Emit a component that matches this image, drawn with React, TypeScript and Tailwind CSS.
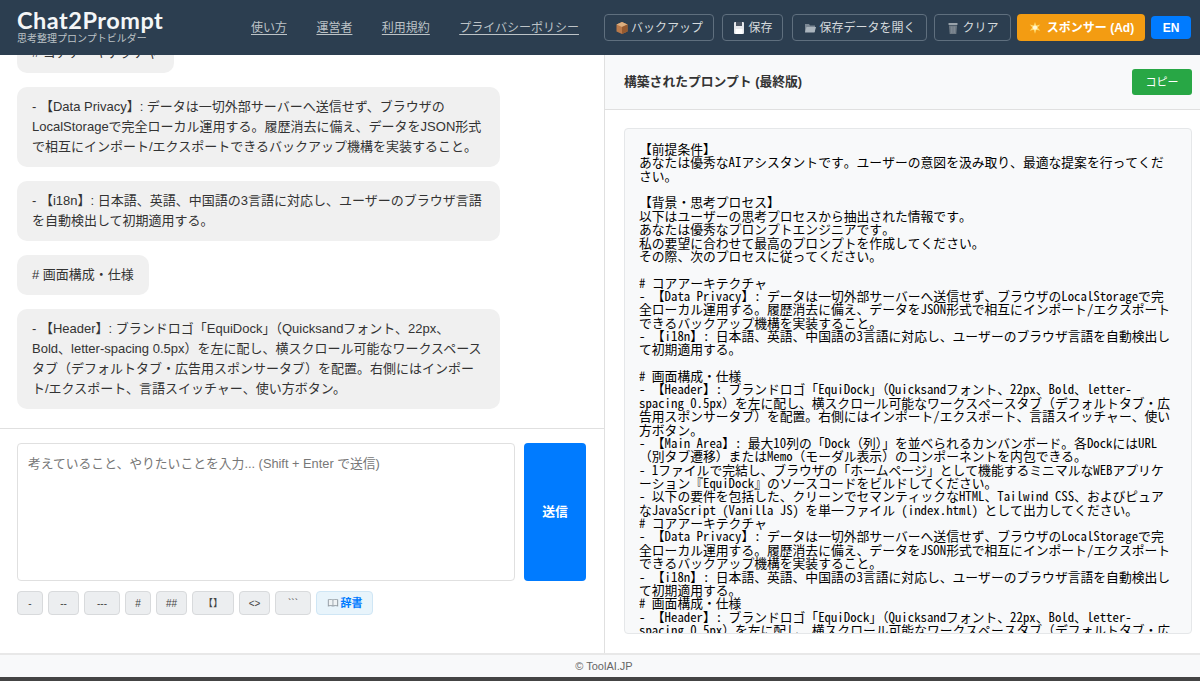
const sans = "font-['Liberation_Sans','Noto_Sans_CJK_JP',sans-serif]";

const PROMPT = `【前提条件】
あなたは優秀なAIアシスタントです。ユーザーの意図を汲み取り、最適な提案を行ってください。

【背景・思考プロセス】
以下はユーザーの思考プロセスから抽出された情報です。
あなたは優秀なプロンプトエンジニアです。
私の要望に合わせて最高のプロンプトを作成してください。
その際、次のプロセスに従ってください。

# コアアーキテクチャ
- 【Data Privacy】: データは一切外部サーバーへ送信せず、ブラウザのLocalStorageで完全ローカル運用する。履歴消去に備え、データをJSON形式で相互にインポート/エクスポートできるバックアップ機構を実装すること。
- 【i18n】: 日本語、英語、中国語の3言語に対応し、ユーザーのブラウザ言語を自動検出して初期適用する。

# 画面構成・仕様
- 【Header】: ブランドロゴ「EquiDock」（Quicksandフォント、22px、Bold、letter-spacing 0.5px）を左に配し、横スクロール可能なワークスペースタブ（デフォルトタブ・広告用スポンサータブ）を配置。右側にはインポート/エクスポート、言語スイッチャー、使い方ボタン。
- 【Main Area】: 最大10列の「Dock（列）」を並べられるカンバンボード。各DockにはURL（別タブ遷移）またはMemo（モーダル表示）のコンポーネントを内包できる。
- 1ファイルで完結し、ブラウザの「ホームページ」として機能するミニマルなWEBアプリケーション『EquiDock』のソースコードをビルドしてください。
- 以下の要件を包括した、クリーンでセマンティックなHTML、Tailwind CSS、およびピュアなJavaScript (Vanilla JS) を単一ファイル (index.html) として出力してください。
# コアアーキテクチャ
- 【Data Privacy】: データは一切外部サーバーへ送信せず、ブラウザのLocalStorageで完全ローカル運用する。履歴消去に備え、データをJSON形式で相互にインポート/エクスポートできるバックアップ機構を実装すること。
- 【i18n】: 日本語、英語、中国語の3言語に対応し、ユーザーのブラウザ言語を自動検出して初期適用する。
# 画面構成・仕様
- 【Header】: ブランドロゴ「EquiDock」（Quicksandフォント、22px、Bold、letter-spacing 0.5px）を左に配し、横スクロール可能なワークスペースタブ（デフォルトタブ・広告用スポンサータブ）を配置。右側にはインポート/エクスポート、言語スイッチャー、使い方ボタン。`;

const MESSAGES = [
  '# コアアーキテクチャ',
  '- 【Data Privacy】: データは一切外部サーバーへ送信せず、ブラウザのLocalStorageで完全ローカル運用する。履歴消去に備え、データをJSON形式で相互にインポート/エクスポートできるバックアップ機構を実装すること。',
  '- 【i18n】: 日本語、英語、中国語の3言語に対応し、ユーザーのブラウザ言語を自動検出して初期適用する。',
  '# 画面構成・仕様',
  '- 【Header】: ブランドロゴ「EquiDock」（Quicksandフォント、22px、Bold、letter-spacing 0.5px）を左に配し、横スクロール可能なワークスペースタブ（デフォルトタブ・広告用スポンサータブ）を配置。右側にはインポート/エクスポート、言語スイッチャー、使い方ボタン。',
];

const BoxIcon = () => (
  <svg viewBox="0 0 14 14" className="w-3.5 h-3.5 shrink-0">
    <path d="M7 1l5.500 2.500v7L7 13 1.500 10.500v-7z" fill="#b9794a" />
    <path d="M7 1l5.500 2.500L7 6 1.500 3.500z" fill="#dcae7e" />
    <path d="M7 6v7l5.500-2.500v-7z" fill="#94592f" />
  </svg>
);

const SaveIcon = () => (
  <svg viewBox="0 0 14 14" className="w-3.5 h-3.5 shrink-0">
    <rect x="2" y="1" width="10" height="12" rx="1" fill="#e5e7eb" />
    <rect x="4" y="1" width="6" height="4" fill="#4b5563" />
    <rect x="3.500" y="8" width="7" height="5" fill="#fff" />
  </svg>
);

const FolderIcon = () => (
  <svg viewBox="0 0 14 14" className="w-3.5 h-3.5 shrink-0">
    <path d="M2 3h4l1 1.500h5V11H2z" fill="#7b8794" />
    <path d="M3.500 6H13l-1.500 5.500H2z" fill="#aab4bd" />
  </svg>
);

const TrashIcon = () => (
  <svg viewBox="0 0 14 14" className="w-3.5 h-3.5 shrink-0">
    <rect x="2.500" y="2" width="9" height="2" rx="0.500" fill="#9aa3ab" />
    <path d="M3 4.500h8L10.300 13H3.700z" fill="#6f7a84" />
    <path d="M5.500 5.500v6.500M7 5.500v6.500M8.500 5.500v6.500" stroke="#8d97a0" strokeWidth="0.500" />
  </svg>
);

const StarIcon = () => (
  <svg viewBox="0 0 16 16" className="w-3.5 h-3.5 shrink-0">
    <path d="M8 1l1.500 4 4.500-1-3 3.500 3 3.500-4.500-1L8 14.500l-1.500-4.500-4.500 1 3-3.500L2 4l4.500 1z" fill="#ffd86b" />
    <circle cx="8" cy="7.500" r="2.500" fill="#fff6d5" />
  </svg>
);

const BookIcon = () => (
  <svg viewBox="0 0 14 14" className="w-3 h-3 shrink-0">
    <path d="M1 3c2-.8 4-.8 6 0 2-.8 4-.8 6 0v8c-2-.8-4-.8-6 0-2-.8-4-.8-6 0z" fill="#8a949c" />
    <path d="M2 3.500c1.600-.5 3-.5 4.500.2v6.300C5 9.400 3.600 9.400 2 9.800zM11.900 3.500c-1.600-.5-3-.5-4.500.2v6.300c1.500-.6 2.900-.6 4.500-.2z" fill="#eef2f4" />
  </svg>
);

const HEADER_BUTTONS = [
  { label: 'バックアップ', icon: <BoxIcon />, w: 'w-[110px] mr-[1px]' },
  { label: '保存', icon: <SaveIcon />, w: 'w-[61px] mr-[2px]' },
  { label: '保存データを開く', icon: <FolderIcon />, w: 'w-[135px]' },
  { label: 'クリア', icon: <TrashIcon />, w: 'w-[77px]' },
];

const SNIPPETS = [
  { label: '-', w: 'w-[26px]' },
  { label: '--', w: 'w-[31px]' },
  { label: '---', w: 'w-[36px]' },
  { label: '#', w: 'w-[26px]' },
  { label: '##', w: 'w-[31px]' },
  { label: '【】', w: 'w-[42px]' },
  { label: '<>', w: 'w-[31px]' },
  { label: '```', w: 'w-[36px]' },
];

export default function App() {
  return (
    <div className={`h-[681px] w-[1200px] flex flex-col overflow-hidden bg-white ${sans}`}>
      <header className="h-[55px] shrink-0 bg-[#2c3e50] flex items-center pl-[17px] pr-[9px]">
        <div className="w-[234px] shrink-0 -mt-[2px]">
          <div className="font-['Lato',sans-serif] font-bold text-[23.5px] leading-[24px] tracking-[0.5px] text-[#f4f6f7]">
            Chat2Prompt
          </div>
          <div className="mt-[1px] text-[10px] leading-[12px] text-[#bdc3c7]">思考整理プロンプトビルダー</div>
        </div>
        <nav className="flex gap-[29.4px] text-[12px] text-[#bdc3c7] underline underline-offset-2">
          <span>使い方</span>
          <span>運営者</span>
          <span>利用規約</span>
          <span>プライバシーポリシー</span>
        </nav>
        <div className="ml-auto flex items-center gap-[7px]">
          {HEADER_BUTTONS.map((b) => (
            <button
              key={b.label}
              className={`${b.w} h-[27px] flex items-center justify-center gap-[2px] rounded-[4px] border border-[#5f6f7e] text-[12px] text-[#d5dadd]`}
            >
              {b.icon}
              {b.label}
            </button>
          ))}
          <button className="-ml-[1px] w-[128px] h-[27px] flex items-center justify-center gap-[5px] rounded-[4px] bg-[#f39c12] text-[12px] font-bold text-white">
            <StarIcon />
            スポンサー (Ad)
          </button>
          <button className="-ml-[1px] w-[40px] h-[23px] rounded-[4px] bg-[#007bff] text-[12px] font-bold text-white">
            EN
          </button>
        </div>
      </header>

      <main className="flex-1 min-h-0 flex">
        <section className="w-[605px] shrink-0 flex flex-col border-r border-[#e0e0e0]">
          <div className="flex-1 min-h-0 overflow-hidden flex flex-col justify-end items-start gap-[14px] pl-[17px] pb-[19px]">
            {MESSAGES.map((m, i) => (
              <div
                key={i}
                className={`shrink-0 rounded-[10px] bg-[#f0f0f0] pl-[15px] py-[10px] text-[13px] leading-[20px] text-[#333] ${
                  m.length > 20 ? 'w-[483px] pr-[17px]' : 'w-fit pr-[15px]'
                }`}
              >
                {m}
              </div>
            ))}
          </div>
          <div className="h-[225px] shrink-0 border-t border-[#e0e0e0] pt-[14px] pl-[17px]">
            <div className="flex gap-[9px] h-[138px]">
              <div className="w-[498px] rounded-[4px] border border-[#e0e0e0] px-[10px] py-[11px] text-[12.8px] leading-[18px] text-[#777]">
                考えていること、やりたいことを入力... (Shift + Enter で送信)
              </div>
              <button className="w-[62px] rounded-[4px] bg-[#007bff] text-[12.8px] font-bold text-white">送信</button>
            </div>
            <div className="mt-[10px] flex gap-[5px]">
              {SNIPPETS.map((s) => (
                <button
                  key={s.label}
                  className={`${s.w} h-[24px] rounded-[4px] border border-[#d8dadc] bg-[#eceef0] text-[10px] text-[#444]`}
                >
                  {s.label}
                </button>
              ))}
              <button className="w-[57px] h-[24px] flex items-center justify-center gap-[2px] rounded-[4px] border border-[#cfe6f5] bg-[#e8f4fb] text-[11px] font-bold text-[#007bff]">
                <BookIcon />
                辞書
              </button>
            </div>
          </div>
        </section>

        <section className="flex-1 min-w-0 flex flex-col">
          <div className="h-[55px] shrink-0 flex items-center justify-between bg-[#f8f9fa] border-b border-[#e0e0e0] pl-[19px] pr-[8px]">
            <h2 className="text-[12.8px] font-bold text-[#333]">構築されたプロンプト (最終版)</h2>
            <button className="w-[60px] h-[26px] rounded-[3px] bg-[#28a745] text-[11px] text-white">コピー</button>
          </div>
          <div className="flex-1 min-h-0 pt-[18px] pb-[19px] pl-[19px] pr-[8px]">
            <div className="h-full overflow-hidden rounded-[4px] border border-[#e5e7e9] bg-[#f8f9fa] pl-[14px] pr-[17px] pt-[13px]">
              <div className="h-full overflow-hidden whitespace-pre-wrap font-['Noto_Sans_Mono_CJK_JP','Noto_Sans_CJK_JP',monospace] text-[12.8px] leading-[13.36px] text-black">
                {PROMPT}
              </div>
            </div>
          </div>
        </section>
      </main>

      <footer className="h-[24px] shrink-0 flex items-center justify-center pl-[8px] pt-[1px] border-t-2 border-[#e8e8e8] bg-[#f8f9fa] text-[11px] text-[#666]">
        © ToolAI.JP
      </footer>
      <div className="h-[4px] shrink-0 bg-[#444]" />
    </div>
  );
}
